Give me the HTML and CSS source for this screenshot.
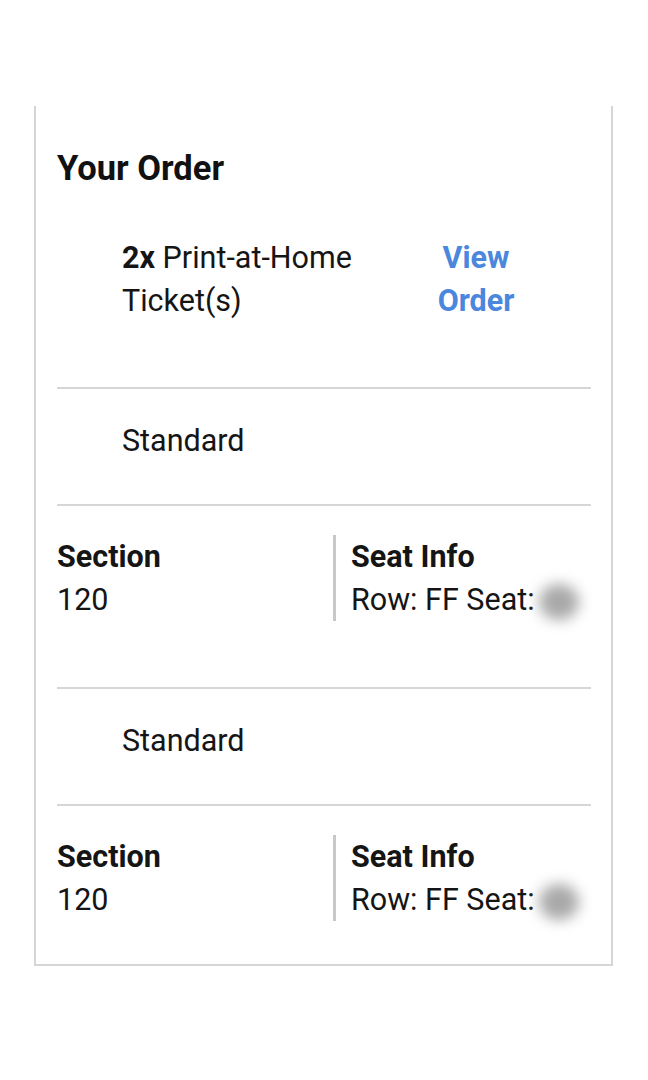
FILE: index.html
```html
<!DOCTYPE html>
<html lang="en">
<head>
<meta charset="utf-8">
<title>Your Order</title>
<link rel="stylesheet" href="styles.css">
</head>
<body>
<main class="page">
  <section class="card">
    <h2 class="card-title">Your Order</h2>
    <div class="item">
      <div class="item-desc"><b>2x</b> Print-at-Home Ticket(s)</div>
      <a class="item-link" href="#">View Order</a>
    </div>
    <div class="ticket">
      <div class="ticket-type">Standard</div>
      <div class="seat-row">
        <div class="seat-col">
          <div class="seat-label">Section</div>
          <div class="seat-value">120</div>
        </div>
        <div class="seat-col seat-col-info">
          <div class="seat-label">Seat Info</div>
          <div class="seat-value">Row: FF Seat:<span class="redact"></span></div>
        </div>
      </div>
    </div>
    <div class="ticket">
      <div class="ticket-type">Standard</div>
      <div class="seat-row">
        <div class="seat-col">
          <div class="seat-label">Section</div>
          <div class="seat-value">120</div>
        </div>
        <div class="seat-col seat-col-info">
          <div class="seat-label">Seat Info</div>
          <div class="seat-value">Row: FF Seat:<span class="redact"></span></div>
        </div>
      </div>
    </div>
  </section>
</main>
</body>
</html>
```

FILE: styles.css
```css
* { box-sizing: border-box; }
html, body { margin: 0; padding: 0; background: #ffffff; }
body {
  font-family: Roboto, "Liberation Sans", Arial, sans-serif;
  color: #151515;
  font-size: 30.5px;
  line-height: 43px;
}
.page {
  padding: 106px 35px 0 34px;
}
.card {
  border: 2px solid #d6d6d6;
  border-top: none;
  padding: 0 20px 0 21px;
}
.card-title {
  margin: 0;
  padding-top: 42px;
  font-size: 34.5px;
  line-height: 40px;
  font-weight: 700;
  color: #111;
}
.item {
  display: flex;
  align-items: flex-start;
  padding: 48px 0 65px;
  border-bottom: 2px solid #d6d6d6;
}
.item-desc {
  width: 335px;
  padding-left: 65px;
  flex: 0 0 auto;
}
.item-desc b { font-weight: 700; }
.item-link {
  width: 100px;
  margin-left: 34px;
  text-align: center;
  color: #4a87dd;
  font-weight: 700;
  text-decoration: none;
}
.ticket { border-bottom: 2px solid #d6d6d6; }
.ticket:last-child { border-bottom: none; }
.ticket-type {
  padding: 30px 0 42px 65px;
  border-bottom: 2px solid #d6d6d6;
}
.seat-row {
  display: grid;
  grid-template-columns: 276px 1fr;
  padding: 29px 0 66px;
}
.ticket:last-child .seat-row { padding-bottom: 43px; }
.seat-col-info {
  border-left: 3px solid #c8c8c8;
  padding-left: 15px;
}
.seat-label { font-weight: 700; }
.seat-value { white-space: nowrap; }
.redact {
  display: inline-block;
  vertical-align: middle;
  width: 40px;
  height: 36px;
  margin-left: 4px;
  border-radius: 50%;
  background: #a9a9a9;
  filter: blur(7px);
}
```
